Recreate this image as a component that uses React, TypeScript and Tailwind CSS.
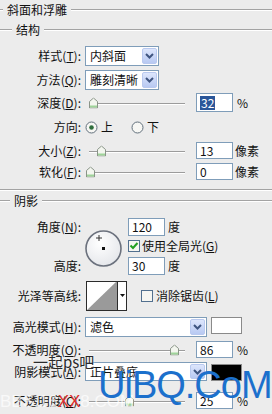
import React from "react";

const font = "font-['Noto_Sans_CJK_SC','Noto_Sans',sans-serif]";

function Line() {
  return <div className="h-[2px] flex-1 border-t border-t-[#a3a3a3] border-b border-b-white" />;
}

function Legend({ title, lead }: { title: string; lead: string }) {
  return (
    <div className="flex h-[20px] items-center">
      <div className={`${lead} h-[2px] border-t border-t-[#a3a3a3] border-b border-b-white`} />
      <span className="px-[4px] leading-none">{title}</span>
      <Line />
    </div>
  );
}

function Label({ text, k }: { text: string; k?: string }) {
  return (
    <span className="w-[81px] shrink-0 text-right leading-none">
      {text}
      {k && (
        <>
          (<span className="underline underline-offset-1">{k}</span>)
        </>
      )}
      :
    </span>
  );
}

function Chevron() {
  return (
    <svg width="9" height="6" viewBox="0 0 9 6">
      <path d="M1 1 L4.5 4.5 L8 1" fill="none" stroke="#3f5580" strokeWidth="2" />
    </svg>
  );
}

function Select({ value, w }: { value: string; w: string }) {
  return (
    <div className={`${w} ml-[4px] flex h-full shrink-0 items-center border border-[#7f9db9] bg-white pl-[4px]`}>
      <span className="flex-1 leading-none">{value}</span>
      <span className="m-px flex h-[calc(100%-2px)] w-[15px] items-center justify-center rounded-[2px] border border-[#b9c9ef] bg-gradient-to-b from-[#dde6fc] to-[#b8c9f2]">
        <Chevron />
      </span>
    </div>
  );
}

function Thumb() {
  return (
    <svg width="9" height="11" viewBox="0 0 9 11">
      <path d="M0.5 4 L4.5 0.5 L8.5 4 V10.5 H0.5 Z" fill="#f3f6ef" stroke="#8a9488" />
      <rect x="1" y="8" width="7" height="2" fill="#9fd49a" />
    </svg>
  );
}

function Slider({ thumb }: { thumb: number }) {
  return (
    <div className="relative ml-[4px] h-full w-[105px] shrink-0">
      <div className="absolute left-[4px] right-[5px] top-1/2 h-[2px] border-t border-t-[#9c9c9c] border-b border-b-white" />
      <div className="absolute top-1/2 -translate-y-1/2" style={{ left: thumb }}>
        <Thumb />
      </div>
    </div>
  );
}

function Input({ value, selected }: { value: string; selected?: boolean }) {
  return (
    <div className="flex h-full w-[37px] shrink-0 items-center border border-[#7f9db9] bg-white pl-[3px]">
      {selected ? (
        <span className="bg-[#2a5699] px-px leading-[14px] text-white">{value}</span>
      ) : (
        <span className="leading-none">{value}</span>
      )}
    </div>
  );
}

function Radio({ on }: { on?: boolean }) {
  return (
    <svg width="13" height="13" viewBox="0 0 13 13">
      <circle cx="6.5" cy="6.5" r="5.5" fill="#f7f7f4" stroke="#62707c" />
      {on && <circle cx="6.5" cy="6.5" r="2.3" fill="#2f6e3c" />}
    </svg>
  );
}

function Check({ on }: { on?: boolean }) {
  return (
    <svg width="12" height="12" viewBox="0 0 12 12">
      <rect x="0.5" y="0.5" width="11" height="11" fill="#f6f6f2" stroke="#52708f" />
      {on && <path d="M2.5 5.5 L5 8 L9.5 3" fill="none" stroke="#23a023" strokeWidth="2" />}
    </svg>
  );
}

export default function App() {
  return (
    <div className={`${font} relative h-[414px] w-[272px] overflow-hidden bg-[#ececec] text-[12px] text-[#111]`}>
      <Legend title="斜面和浮雕" lead="w-[3px]" />
      <div className="flex h-[20px] items-center">
        <div className="w-[12px] h-[2px] border-t border-t-[#a3a3a3] border-b border-b-white" />
        <span className="px-[4px] leading-none">结构</span>
        <Line />
      </div>

      <div className="mt-[6px] flex h-[20px] items-center">
        <Label text="样式" k="T" />
        <Select value="内斜面" w="w-[74px]" />
      </div>
      <div className="mt-[4px] flex h-[20px] items-center">
        <Label text="方法" k="Q" />
        <Select value="雕刻清晰" w="w-[74px]" />
      </div>
      <div className="mt-[3px] flex h-[19px] items-center">
        <Label text="深度" k="D" />
        <Slider thumb={4} />
        <div className="ml-[6px] h-full">
          <Input value="32" selected />
        </div>
        <span className="ml-[4px] leading-none">%</span>
      </div>
      <div className="mt-[8px] flex h-[14px] items-center">
        <Label text="方向" />
        <span className="ml-[4px] flex items-center gap-[3px] leading-none">
          <Radio on />
          <span>上</span>
        </span>
        <span className="ml-[18px] flex items-center gap-[3px] leading-none">
          <Radio />
          <span>下</span>
        </span>
      </div>
      <div className="mt-[8px] flex h-[17px] items-center">
        <Label text="大小" k="Z" />
        <Slider thumb={12} />
        <div className="ml-[6px] h-full">
          <Input value="13" />
        </div>
        <span className="ml-[2px] leading-none">像素</span>
      </div>
      <div className="mt-[4px] flex h-[17px] items-center">
        <Label text="软化" k="F" />
        <Slider thumb={1} />
        <div className="ml-[6px] h-full">
          <Input value="0" />
        </div>
        <span className="ml-[2px] leading-none">像素</span>
      </div>

      <div className="mt-[9px] h-[2px] border-t border-t-[#a3a3a3] border-b border-b-white" />

      <div className="flex h-[20px] items-center">
        <div className="w-[10px] h-[2px] border-t border-t-[#a3a3a3] border-b border-b-white" />
        <span className="px-[4px] leading-none">阴影</span>
        <Line />
      </div>

      <div className="mt-[7px] flex h-[57px]">
        <div className="flex w-[81px] shrink-0 flex-col justify-between">
          <div className="flex h-[18px] items-center justify-end">
            <Label text="角度" k="N" />
          </div>
          <div className="flex h-[18px] items-center justify-end">
            <Label text="高度" />
          </div>
        </div>
        <svg className="ml-[4px] mt-[12px] shrink-0" width="37" height="37" viewBox="0 0 37 37">
          <defs>
            <radialGradient id="dial" cx="0.4" cy="0.35" r="0.7">
              <stop offset="0" stopColor="#ffffff" />
              <stop offset="1" stopColor="#e4e6ea" />
            </radialGradient>
          </defs>
          <circle cx="18.5" cy="18.5" r="17.5" fill="url(#dial)" stroke="#6b717d" strokeWidth="1.6" />
          <path d="M14 5 V11 M11 8 H17" stroke="#333" strokeWidth="1" />
          <rect x="17" y="17" width="3" height="3" fill="#111" />
        </svg>
        <div className="ml-[6px] flex flex-col">
          <div className="flex h-[18px] items-center">
            <div className="h-full">
              <Input value="120" />
            </div>
            <span className="ml-[3px] leading-none">度</span>
          </div>
          <div className="mt-[4px] flex h-[11px] items-center gap-[2px] leading-none">
            <Check on />
            <span>
              使用全局光(<span className="underline underline-offset-1">G</span>)
            </span>
          </div>
          <div className="mt-[6px] flex h-[18px] items-center">
            <div className="h-full">
              <Input value="30" />
            </div>
            <span className="ml-[3px] leading-none">度</span>
          </div>
        </div>
      </div>

      <div className="mt-[6px] flex h-[30px] items-center">
        <Label text="光泽等高线" />
        <svg className="ml-[5px] shrink-0" width="41" height="30" viewBox="0 0 41 30">
          <rect x="0.5" y="0.5" width="40" height="29" fill="#fff" stroke="#2b2b2b" />
          <polygon points="1,29 30,1 31,1 31,29" fill="#9a9a9a" />
          <path d="M31.5 1 V29" stroke="#2b2b2b" />
          <polygon points="34,13 39,13 36.5,16" fill="#111" />
        </svg>
        <span className="ml-[14px] flex items-center gap-[3px] leading-none">
          <Check />
          <span>
            消除锯齿(<span className="underline underline-offset-1">L</span>)
          </span>
        </span>
      </div>

      <div className="mt-[6px] flex h-[20px] items-start">
        <div className="flex h-full items-center">
          <Label text="高光模式" k="H" />
        </div>
        <Select value="滤色" w="w-[122px]" />
        <div className="ml-[4px] h-[17px] w-[31px] border border-[#8a8a8a] bg-white" />
      </div>
      <div className="mt-[4px] flex h-[17px] items-center">
        <Label text="不透明度" k="O" />
        <Slider thumb={85} />
        <div className="ml-[6px] h-full">
          <Input value="86" />
        </div>
        <span className="ml-[4px] leading-none">%</span>
      </div>
      <div className="mt-[4px] flex h-[19px] items-end">
        <div className="flex h-full items-center">
          <Label text="阴影模式" k="A" />
        </div>
        <Select value="正片叠底" w="w-[122px]" />
        <div className="ml-[4px] h-[17px] w-[31px] border border-[#8a8a8a] bg-black" />
      </div>
      <div className="mt-[11px] flex h-[17px] items-center">
        <Label text="不透明度" k="C" />
        <Slider thumb={40} />
        <div className="ml-[6px] h-full">
          <Input value="25" />
        </div>
        <span className="ml-[4px] leading-none">%</span>
      </div>

      {/* watermarks */}
      <span className="absolute left-[33px] top-[354px] text-[15px] leading-none text-[#2a2a2a] [text-shadow:0_0_2px_#fff]">
        一起ps吧
      </span>
      <span className="absolute left-[0px] top-[393px] font-['Liberation_Sans',sans-serif] text-[17px] leading-none text-white/70">
        BBS.16<span className="text-[#e0302c]">XX</span>8.COM
      </span>
      <span className="absolute left-[98px] top-[366px] font-['Liberation_Sans',sans-serif] text-[38px] leading-none tracking-[-1px] text-[#1c70cc]">
        UiBQ.CoM
      </span>
    </div>
  );
}
